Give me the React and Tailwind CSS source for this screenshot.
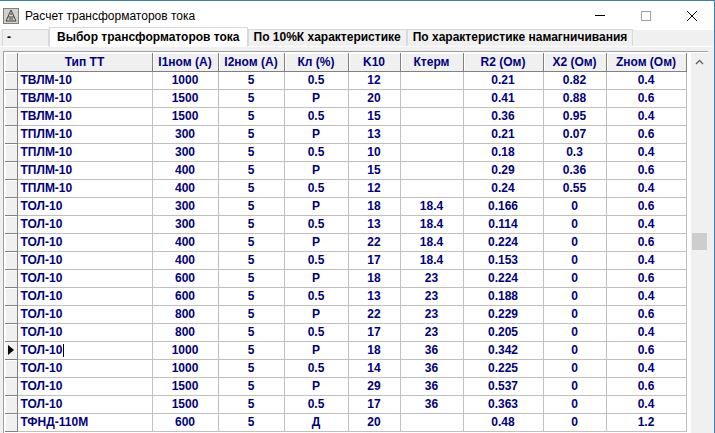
const cols = [
  ["Тип ТТ", 135, "left"],
  ["I1ном (А)", 66],
  ["I2ном (А)", 66],
  ["Кл (%)", 64],
  ["K10", 52],
  ["Ктерм", 63],
  ["R2 (Ом)", 80],
  ["X2 (Ом)", 63],
  ["Zном (Ом)", 80],
];
const rows = [
  ["ТВЛМ-10","1000","5","0.5","12","","0.21","0.82","0.4"],
  ["ТВЛМ-10","1500","5","Р","20","","0.41","0.88","0.6"],
  ["ТВЛМ-10","1500","5","0.5","15","","0.36","0.95","0.4"],
  ["ТПЛМ-10","300","5","Р","13","","0.21","0.07","0.6"],
  ["ТПЛМ-10","300","5","0.5","10","","0.18","0.3","0.4"],
  ["ТПЛМ-10","400","5","Р","15","","0.29","0.36","0.6"],
  ["ТПЛМ-10","400","5","0.5","12","","0.24","0.55","0.4"],
  ["ТОЛ-10","300","5","Р","18","18.4","0.166","0","0.6"],
  ["ТОЛ-10","300","5","0.5","13","18.4","0.114","0","0.4"],
  ["ТОЛ-10","400","5","Р","22","18.4","0.224","0","0.6"],
  ["ТОЛ-10","400","5","0.5","17","18.4","0.153","0","0.4"],
  ["ТОЛ-10","600","5","Р","18","23","0.224","0","0.6"],
  ["ТОЛ-10","600","5","0.5","13","23","0.188","0","0.4"],
  ["ТОЛ-10","800","5","Р","22","23","0.229","0","0.6"],
  ["ТОЛ-10","800","5","0.5","17","23","0.205","0","0.4"],
  ["ТОЛ-10","1000","5","Р","18","36","0.342","0","0.6"],
  ["ТОЛ-10","1000","5","0.5","14","36","0.225","0","0.4"],
  ["ТОЛ-10","1500","5","Р","29","36","0.537","0","0.6"],
  ["ТОЛ-10","1500","5","0.5","17","36","0.363","0","0.4"],
  ["ТФНД-110М","600","5","Д","20","","0.48","0","1.2"],
];
const font = { fontFamily: '"Liberation Sans", Arial, sans-serif' };

export default function App() {
  return (
    <div className="w-[715px] h-[433px] overflow-hidden bg-[#f0f0f0] relative" style={font}>
      <div className="h-[30px] bg-white flex items-center border-t border-[#3c7fb1]">
        <svg width="16" height="16" viewBox="0 0 16 16" className="ml-[3px]">
          <rect x="0.5" y="0.5" width="15" height="15" fill="#d4d0c8" stroke="#808080"/>
          <path d="M8 2 L13 13 H3 Z" fill="none" stroke="#404040"/>
          <path d="M5 9h6M6 11h4M7 6h2" stroke="#404040"/>
        </svg>
        <span className="ml-[6px] text-[12px] text-black">Расчет трансформаторов тока</span>
        <div className="ml-auto flex items-center">
          <div className="w-[46px] flex justify-center"><div className="w-[10px] h-px bg-black"></div></div>
          <div className="w-[46px] flex justify-center"><div className="w-[10px] h-[10px] border border-[#a0a0a0]"></div></div>
          <div className="w-[46px] flex justify-center">
            <svg width="12" height="12" viewBox="0 0 12 12"><path d="M1 1L11 11M11 1L1 11" stroke="#000" strokeWidth="1"/></svg>
          </div>
        </div>
      </div>
      <div className="absolute right-0 top-0 bottom-0 w-px bg-[#3c7fb1]"></div>
      <div className="flex items-end h-[17px] mt-0 pl-[2px] text-[12px] font-bold text-black border-b border-white">
        <div className="h-[17px] w-[47px] border border-b-0 border-[#d9d9d9] px-[4px] leading-[15px] mt-[2px]">-</div>
        <div className="h-[20px] bg-white border border-b-0 border-[#d9d9d9] px-[7px] leading-[18px] relative top-[1px]">Выбор трансформаторов тока</div>
        <div className="h-[17px] border border-b-0 border-[#d9d9d9] px-[5px] leading-[15px]">По 10%К характеристике</div>
        <div className="h-[17px] border border-b-0 border-[#d9d9d9] px-[5px] leading-[15px]">По характеристике намагничивания</div>
      </div>
      <div className="mx-[3px] mt-[4px] h-[390px] w-[705px] border-l border-t border-[#a0a0a0] bg-white flex overflow-hidden">
        <div className="ml-[1px] mt-[1px]">
          <table className="border-collapse table-fixed text-[12px] font-bold text-[#000080]">
            <tbody>
              <tr className="h-[18px]">
                <td className="w-[12px] bg-[#f0f0f0] border-r border-b border-[#808080] shadow-[inset_1px_1px_0_#fff]"></td>
                {cols.map((c, i) => (
                  <td key={i} style={{ width: c[1] }} className="bg-[#f0f0f0] text-center border-r border-b border-[#808080] shadow-[inset_1px_1px_0_#fff] p-0 leading-[16px]">{c[0]}</td>
                ))}
              </tr>
              {rows.map((r, ri) => (
                <tr key={ri} className="h-[18px]">
                  <td className="w-[12px] bg-[#f0f0f0] border-r border-b border-[#808080] shadow-[inset_1px_1px_0_#fff] p-0 align-middle text-black">
                    {ri === 15 ? <svg width="8" height="10" viewBox="0 0 8 10" className="ml-[2px]"><path d="M1 0L7 5L1 10Z" fill="#000"/></svg> : null}
                  </td>
                  {r.map((v, ci) => (
                    <td key={ci} className={`border-r border-b border-[#c0c0c0] p-0 leading-[16px] ${ci === 0 ? "text-left pl-[3px]" : "text-center"}`}>
                      {v}{ri === 15 && ci === 0 ? <span className="inline-block w-px h-[13px] bg-black align-middle ml-px"></span> : null}
                    </td>
                  ))}
                </tr>
              ))}
            </tbody>
          </table>
        </div>
        <div className="ml-auto w-[17px] bg-[#f0f0f0] flex flex-col items-center relative mt-[1px]">
          <svg width="9" height="6" viewBox="0 0 9 6" className="mt-[6px]"><path d="M1 5L4.5 1.5L8 5" fill="none" stroke="#606060" strokeWidth="1.3"/></svg>
          <div className="absolute top-[180px] w-[15px] h-[17px] bg-[#cdcdcd]"></div>
        </div>
      </div>
    </div>
  );
}
